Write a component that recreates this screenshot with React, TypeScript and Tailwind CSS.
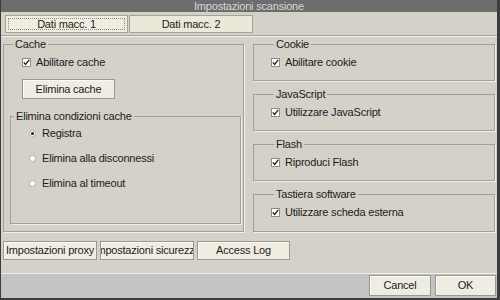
import type { ReactNode } from "react";

const face = "font-['Liberation_Sans',Arial,sans-serif] text-[11px] tracking-[-0.2px] text-[#1c1c1c]";

function CheckBox() {
  return (
    <span className="flex h-[9px] w-[9px] items-center justify-center border border-[#8e8b84] bg-white">
      <svg width="7" height="7" viewBox="0 0 7 7">
        <path d="M0.8 3.4 L2.6 5.4 L6.2 0.9" fill="none" stroke="#222" strokeWidth="1.4" />
      </svg>
    </span>
  );
}

function CheckRow({ label }: { label: string }) {
  return (
    <div className="flex h-[13px] items-center">
      <CheckBox />
      <span className="ml-[5px] leading-[13px]">{label}</span>
    </div>
  );
}

function Radio({ label, on }: { label: string; on?: boolean }) {
  return (
    <div className="flex h-[13px] items-center">
      <span className="flex h-[7px] w-[7px] items-center justify-center rounded-full border border-[#b3afa7] bg-white">
        {on && <span className="h-[3px] w-[3px] rounded-full bg-[#111]" />}
      </span>
      <span className="ml-[6px] leading-[13px]">{label}</span>
    </div>
  );
}

function Frame({ title, className, children }: { title: string; className?: string; children?: ReactNode }) {
  return (
    <fieldset className={`min-w-0 border border-[#a29f98] shadow-[1px_1px_0_#f2f0eb] ${className ?? ""}`}>
      <legend className="ml-[3px] px-[2px] leading-[12px]">{title}</legend>
      {children}
    </fieldset>
  );
}

function Btn({ label, className }: { label: string; className?: string }) {
  return (
    <div
      className={`flex items-center justify-center overflow-hidden whitespace-nowrap border border-[#9b988f] bg-[#efede2] shadow-[inset_1px_1px_0_#fbfaf5] ${className ?? ""}`}
    >
      {label}
    </div>
  );
}

export default function App() {
  return (
    <div className={`flex h-[300px] w-[500px] flex-col overflow-hidden border-b-2 border-l border-r-[3px] border-[#3c3c3c] bg-[#d5d1c9] ${face}`}>
      {/* title bar */}
      <div className="flex h-[12px] shrink-0 items-center justify-center bg-[#6d6d6d] text-[11px] leading-[12px] text-[#d6d6d6]">
        Impostazioni scansione
      </div>

      {/* tabs */}
      <div className="flex h-[24px] shrink-0 border-b border-[#a6a39c] pl-[4px] pt-[3px] shadow-[0_1px_0_#f3f1ec]">
        <div className="flex h-[18px] w-[123px] items-center justify-center border border-[#a5a299] bg-[#f0eee1] p-[2px]">
          <div className="flex h-full w-full items-center justify-center border border-dotted border-[#8a877f]">
            Dati macc. 1
          </div>
        </div>
        <div className="ml-[1px] flex h-[18px] w-[124px] items-center justify-center border border-[#a5a299] bg-[#ebe8d9]">
          Dati macc. 2
        </div>
      </div>

      {/* main panels */}
      <div className="mt-[2px] flex shrink-0 pl-[2px]">
        <Frame title="Cache" className="h-[194px] w-[241px] px-[6px]">
          <div className="ml-[12px] pt-[6px]">
            <CheckRow label="Abilitare cache" />
            <Btn label="Elimina cache" className="mt-[10px] h-[20px] w-[93px]" />
          </div>
          <Frame title="Elimina condizioni cache" className="mt-[11px] h-[114px] w-[231px]">
            <div className="flex flex-col gap-[12px] pl-[18px] pt-[5px]">
              <Radio label="Registra" on />
              <Radio label="Elimina alla disconnessi" />
              <Radio label="Elimina al timeout" />
            </div>
          </Frame>
        </Frame>

        <div className="ml-[9px] flex w-[242px] flex-col gap-[7px]">
          <Frame title="Cookie" className="h-[43px] pl-[17px]">
            <div className="pt-[6px]">
              <CheckRow label="Abilitare cookie" />
            </div>
          </Frame>
          <Frame title="JavaScript" className="h-[43px] pl-[17px]">
            <div className="pt-[6px]">
              <CheckRow label="Utilizzare JavaScript" />
            </div>
          </Frame>
          <Frame title="Flash" className="h-[43px] pl-[17px]">
            <div className="pt-[6px]">
              <CheckRow label="Riproduci Flash" />
            </div>
          </Frame>
          <Frame title="Tastiera software" className="h-[44px] pl-[17px]">
            <div className="pt-[6px]">
              <CheckRow label="Utilizzare scheda esterna" />
            </div>
          </Frame>
        </div>
      </div>

      {/* secondary buttons */}
      <div className="mt-[9px] flex shrink-0 gap-[3px] pl-[2px]">
        <Btn label="Impostazioni proxy" className="h-[19px] w-[94px]" />
        <Btn label="Impostazioni sicurezza" className="h-[19px] w-[94px]" />
        <Btn label="Access Log" className="h-[19px] w-[93px]" />
      </div>

      <div className="flex-1" />

      {/* dialog footer */}
      <div className="flex h-[25px] shrink-0 items-start justify-end gap-[4px] border-t border-[#eeece6] bg-[#c3c3c3] pr-[1px] pt-[1px]">
        <Btn label="Cancel" className="h-[21px] w-[62px]" />
        <Btn label="OK" className="h-[21px] w-[61px]" />
      </div>
    </div>
  );
}
